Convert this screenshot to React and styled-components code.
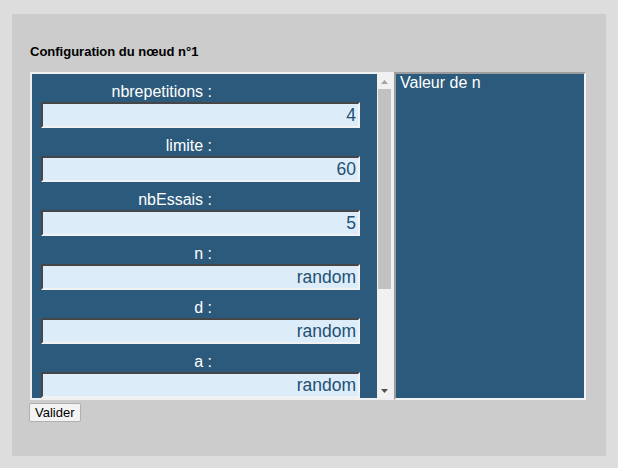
import React from "react";
import styled, { createGlobalStyle } from "styled-components";

const Global = createGlobalStyle`
  html, body { margin: 0; padding: 0; background: #dddddd; }
  body { font-family: "Liberation Sans", Arial, sans-serif; }
`;

const Page = styled.div`
  padding: 14px 12px 12px 12px;
`;

const Panel = styled.section`
  box-sizing: border-box;
  width: 594px;
  height: 442px;
  background: #cccccc;
  padding: 30px 18px 0 18px;
`;

const Title = styled.h3`
  margin: 0 0 13px 0;
  font-size: 13px;
  line-height: 15px;
  font-weight: bold;
  color: #000;
`;

const Split = styled.div`
  display: flex;
  height: 328px;
`;

const ParamBox = styled.div`
  box-sizing: border-box;
  width: 364px;
  height: 100%;
  border: 2px solid #f0f0f0;
  display: flex;
`;

const Viewport = styled.div`
  flex: 1;
  background: #2c5a7c;
  overflow: hidden;
`;

const ScrollBar = styled.div`
  width: 15px;
  flex: none;
  background: #f1f1f1;
  display: flex;
  flex-direction: column;
`;

const ScrollArrow = styled.div`
  height: 15px;
  flex: none;
  display: flex;
  align-items: center;
  justify-content: center;
  color: ${(p) => p.$color};
`;

const ScrollTrack = styled.div`
  flex: 1;
  display: flex;
  flex-direction: column;
`;

const ScrollThumb = styled.div`
  height: 200px;
  margin: 0 1px;
  background: #c1c1c1;
`;

const Row = styled.div`
  display: flex;
  flex-direction: column;
`;

const Label = styled.label`
  display: block;
  width: 180px;
  text-align: right;
  padding-top: 8px;
  font-size: 16px;
  line-height: 20px;
  color: #ffffff;
`;

const Field = styled.input`
  box-sizing: border-box;
  display: block;
  margin-left: 9px;
  width: 319px;
  height: 26px;
  padding: 0 2px;
  border: 2px inset #9a9a9a;
  border-right-color: #f2f2f2;
  border-bottom-color: #f2f2f2;
  background: #dcedf9;
  color: #234f74;
  font-family: "Liberation Sans", Arial, sans-serif;
  font-size: 17.5px;
  text-align: right;
  outline: none;
`;

const Output = styled.div`
  box-sizing: border-box;
  width: 192px;
  height: 100%;
  border: 2px solid;
  border-color: #9c9c9c #f4f4f4 #f4f4f4 #9c9c9c;
  background: #2c5a7c;
  color: #ffffff;
  font-size: 16px;
  line-height: 18px;
  padding: 0 4px;
`;

const Button = styled.button`
  margin: 3px 0 0 -1px;
  height: 19px;
  padding: 0 5px;
  border: 1px solid #b0b0b0;
  border-radius: 2px;
  background: #f3f3f3;
  color: #000;
  font-family: "Liberation Sans", Arial, sans-serif;
  font-size: 13px;
  line-height: 15px;
`;

const Arrow = ({ up }) => (
  <svg width="7" height="4" viewBox="0 0 7 4">
    <path d={up ? "M0 4 L3.5 0 L7 4 Z" : "M0 0 L7 0 L3.5 4 Z"} fill="currentColor" />
  </svg>
);

const params = [
  ["nbrepetitions", "4"],
  ["limite", "60"],
  ["nbEssais", "5"],
  ["n", "random"],
  ["d", "random"],
  ["a", "random"],
  ["b", "random"],
  ["c", "random"],
  ["x", "random"],
];

export default function App() {
  return (
    <>
      <Global />
      <Page>
        <Panel>
          <Title>Configuration du nœud n°1</Title>
          <Split>
            <ParamBox>
              <Viewport>
                {params.map(([name, value]) => (
                  <Row key={name}>
                    <Label>{name} :</Label>
                    <Field defaultValue={value} />
                  </Row>
                ))}
              </Viewport>
              <ScrollBar>
                <ScrollArrow $color="#a3a3a3">
                  <Arrow up />
                </ScrollArrow>
                <ScrollTrack>
                  <ScrollThumb />
                </ScrollTrack>
                <ScrollArrow $color="#505050">
                  <Arrow />
                </ScrollArrow>
              </ScrollBar>
            </ParamBox>
            <Output>Valeur de n</Output>
          </Split>
          <Button>Valider</Button>
        </Panel>
      </Page>
    </>
  );
}
